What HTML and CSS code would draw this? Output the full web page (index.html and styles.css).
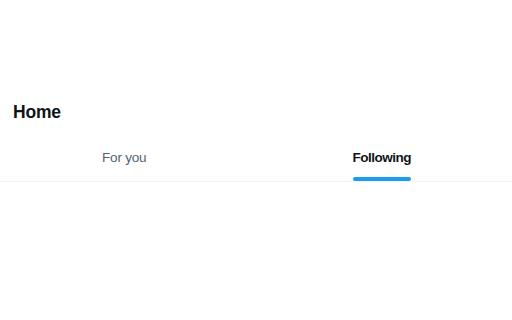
FILE: index.html
```html
<!DOCTYPE html>
<html>
<head>
<meta charset="utf-8">
<link rel="stylesheet" href="styles.css">
</head>
<body>
<div class="page">
  <header class="title-row">
    <h1 class="title">Home</h1>
  </header>
  <nav class="tabs">
    <div class="tab tab-first">
      <div class="tab-inner">
        <span class="tab-label">For you</span>
      </div>
    </div>
    <div class="tab tab-second active">
      <div class="tab-inner">
        <span class="tab-label">Following</span>
        <span class="indicator"></span>
      </div>
    </div>
  </nav>
</div>
</body>
</html>
```
FILE: styles.css
```css
html, body {
  margin: 0;
  padding: 0;
  background: #ffffff;
}
body {
  font-family: "Liberation Sans", Arial, sans-serif;
  color: #0f1419;
}
.page {
  width: 512px;
  padding-top: 100px;
}
.title-row {
  padding: 0 13px;
}
.title {
  margin: 0;
  font-size: 17.5px;
  line-height: 24px;
  font-weight: 700;
  letter-spacing: -0.2px;
  color: #0f1419;
}
.tabs {
  display: flex;
  border-bottom: 1px solid #eff3f4;
}
.tab {
  flex: 1;
  display: flex;
  justify-content: center;
  height: 57px;
  padding-top: 24px;
  box-sizing: border-box;
}
.tab-first {
  padding-right: 9px;
}
.tab-second {
  padding-right: 6px;
}
.tab-inner {
  display: inline-flex;
  flex-direction: column;
  align-items: stretch;
}
.tab-label {
  font-size: 13.5px;
  line-height: 20px;
  color: #536471;
  letter-spacing: -0.2px;
}
.active .tab-label {
  font-weight: 700;
  color: #0f1419;
  letter-spacing: -0.5px;
}
.indicator {
  display: block;
  height: 4px;
  margin-top: 9px;
  border-radius: 2px;
  background: #1d9bf0;
}
```
